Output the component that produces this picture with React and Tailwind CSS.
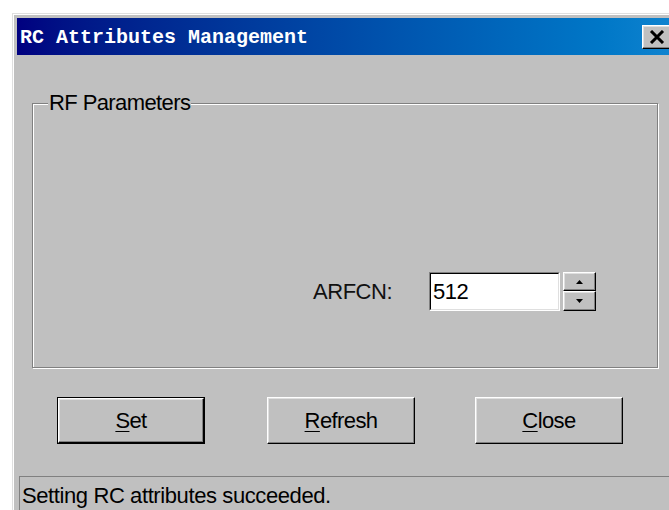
import React from 'react';

const raised =
  'border border-t-white border-l-white border-r-black border-b-black shadow-[inset_-1px_-1px_0_#808080,inset_1px_1px_0_#dfdfdf]';

const Btn = ({ hot, rest, isDefault }) => {
  const face = (
    <div className={`w-full h-full bg-[#c0c0c0] flex items-center justify-center ${raised}`}>
      <span className="text-[22px] tracking-[-0.6px] text-black">
        <span className="underline underline-offset-[3px] decoration-1">{hot}</span>
        {rest}
      </span>
    </div>
  );
  return isDefault ? (
    <div className="w-[148px] h-[47px] border border-black">{face}</div>
  ) : (
    <div className="w-[148px] h-[47px]">{face}</div>
  );
};

const Arrow = ({ up }) => (
  <svg width="7" height="4" viewBox="0 0 7 4">
    {up ? <path d="M3.5 0 L7 4 L0 4 Z" fill="#000" /> : <path d="M0 0 L7 0 L3.5 4 Z" fill="#000" />}
  </svg>
);

export default function App() {
  return (
    <div
      className="w-[669px] h-[510px] bg-white overflow-hidden"
      style={{ fontFamily: '"Liberation Sans", Arial, sans-serif' }}
    >
      {/* dialog window, runs past the right edge */}
      <div className="ml-[12px] mt-[13px] w-[666px] h-[520px] border-l border-t border-[#dfdfdf] bg-[#c0c0c0]">
        <div className="h-full border-l border-t border-white p-[3px]">
          {/* title bar */}
          <div className="h-[37px] flex items-center justify-between bg-gradient-to-r from-[#000080] to-[#1084d0]">
            <span
              className="pl-[3px] pt-[3px] text-[20px] font-bold text-white leading-none"
              style={{ fontFamily: '"Liberation Mono", "Courier New", monospace' }}
            >
              RC Attributes Management
            </span>
            <div className={`mr-[3px] w-[30px] h-[24px] bg-[#c0c0c0] flex items-center justify-center ${raised}`}>
              <svg width="16" height="14" viewBox="0 0 16 14">
                <path d="M2 1 L14 13 M14 1 L2 13" stroke="#000" strokeWidth="3" />
              </svg>
            </div>
          </div>

          {/* RF Parameters group */}
          <div className="relative ml-[15px] mt-[48px] w-[626px] h-[265px] border border-[#808080] shadow-[inset_1px_1px_0_#fff,1px_1px_0_#fff]">
            <span className="absolute left-[15px] -top-[14px] px-[1px] bg-[#c0c0c0] text-[22px] tracking-[-0.6px] text-black leading-[26px]">
              RF Parameters
            </span>
            <div className="flex justify-end items-center pt-[168px] pr-[61px]">
              <span className="text-[22px] tracking-[-0.5px] text-[#111] mr-[37px]">ARFCN:</span>
              <div className="w-[131px] h-[39px] border border-t-[#808080] border-l-[#808080] border-r-white border-b-white">
                <div className="w-full h-full bg-white border border-t-black border-l-black border-r-[#dfdfdf] border-b-[#dfdfdf] flex items-center pl-[2px]">
                  <span className="text-[22px] tracking-[-0.5px] text-black">512</span>
                </div>
              </div>
              <div className="ml-[3px] w-[33px] h-[39px] flex flex-col">
                <div className={`h-[19px] bg-[#c0c0c0] flex items-center justify-center ${raised}`}>
                  <Arrow up />
                </div>
                <div className={`h-[20px] bg-[#c0c0c0] flex items-center justify-center ${raised}`}>
                  <Arrow />
                </div>
              </div>
            </div>
          </div>

          {/* action buttons */}
          <div className="flex mt-[29px] ml-[40px]">
            <Btn hot="S" rest="et" isDefault />
            <div className="ml-[62px]">
              <Btn hot="R" rest="efresh" />
            </div>
            <div className="ml-[60px]">
              <Btn hot="C" rest="lose" />
            </div>
          </div>

          {/* status bar */}
          <div className="ml-[2px] mt-[32px] h-[40px] border-t border-l border-[#808080] pl-[2px] pt-[2px]">
            <span className="text-[22px] tracking-[-0.4px] text-black">Setting RC attributes succeeded.</span>
          </div>
        </div>
      </div>
    </div>
  );
}
